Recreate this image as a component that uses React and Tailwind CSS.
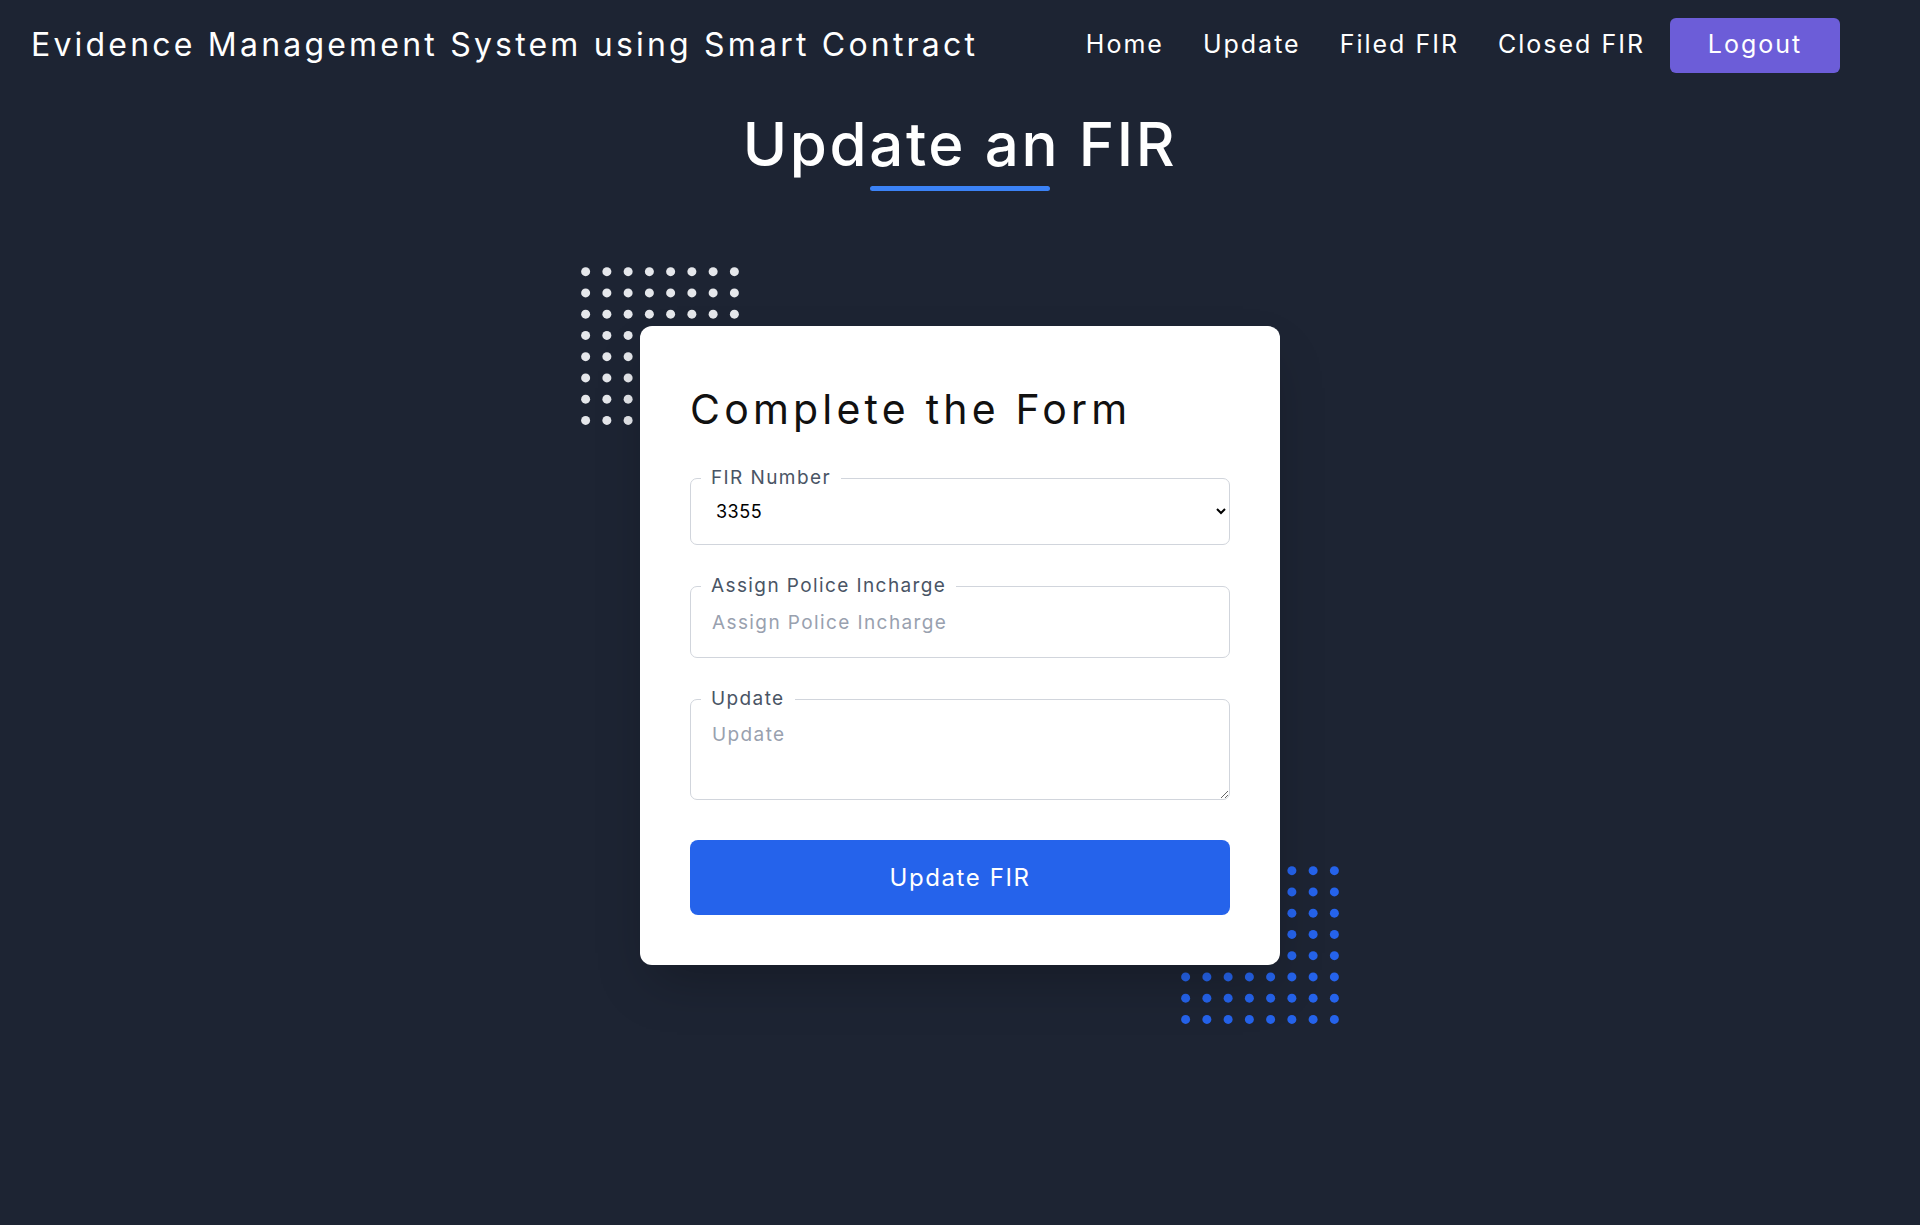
import React from "react";

function Dots({ color }) {
  const circles = [];
  for (let r = 0; r < 8; r++) {
    for (let c = 0; c < 8; c++) {
      circles.push(
        <circle key={r * 8 + c} cx={10.625 + c * 21.25} cy={10.625 + r * 21.25} r="4.5" fill={color} />
      );
    }
  }
  return (
    <svg width="170" height="170" viewBox="0 0 170 170">
      {circles}
    </svg>
  );
}

export default function App() {
  return (
    <div className="min-h-screen bg-[#1d2433] font-[family-name:Inter,sans-serif] text-white">
      <nav className="h-[90px] flex items-center justify-between pl-[31px] pr-[80px]">
        <div className="text-[32px] tracking-[3.2px] font-normal">
          Evidence Management System using Smart Contract
        </div>
        <div className="flex items-center">
          <div className="flex items-center gap-[39px] text-[25px] tracking-[2px]">
            <a href="#">Home</a>
            <a href="#">Update</a>
            <a href="#">Filed FIR</a>
            <a href="#">Closed FIR</a>
          </div>
          <button className="ml-[25px] w-[170px] h-[55px] rounded-[6px] bg-[#6c5dd8] text-[25px] tracking-[2px] text-white">
            Logout
          </button>
        </div>
      </nav>

      <main className="flex flex-col items-center pb-10">
        <h1 className="mt-[18px] text-[60px] leading-[72px] font-medium tracking-[2.6px]">Update an FIR</h1>
        <div className="mt-[6px] w-[180px] h-[5px] rounded-full bg-[#3b82f6]" />

        <div className="relative mt-[135px]">
          <div className="absolute -left-[65px] -top-[65px]">
            <Dots color="#e5e7eb" />
          </div>
          <div className="absolute -right-[65px] -bottom-[65px]">
            <Dots color="#2563eb" />
          </div>

          <div className="relative z-10 w-[640px] bg-white rounded-[12px] shadow-2xl px-[50px] pt-[50px] pb-[50px] text-black">
            <h2 className="mt-[9px] text-[41px] leading-[48px] font-normal tracking-[4.2px] text-[#111]">
              Complete the Form
            </h2>

            <fieldset className="mt-[32px] border border-gray-300 rounded-[7px] p-0 pb-[13px] m-0">
              <legend className="ml-[10px] px-[10px] text-[19px] leading-[26px] text-gray-600 tracking-[1.4px]">
                FIR Number
              </legend>
              <select
                defaultValue="3355"
                className="block w-full h-[40px] pl-[21px] pr-[12px] text-[18px] text-black bg-transparent outline-none tracking-[0.5px]"
              >
                <option value="3355">3355</option>
              </select>
            </fieldset>

            <fieldset className="mt-[28px] border border-gray-300 rounded-[7px] p-0 pb-[12px] m-0">
              <legend className="ml-[10px] px-[10px] text-[19px] leading-[26px] text-gray-600 tracking-[1.4px]">
                Assign Police Incharge
              </legend>
              <input
                type="text"
                placeholder="Assign Police Incharge"
                className="block w-full h-[46px] pl-[21px] pr-[12px] text-[19px] bg-transparent outline-none placeholder:text-gray-400 tracking-[1.4px]"
              />
            </fieldset>

            <fieldset className="mt-[28px] border border-gray-300 rounded-[7px] p-0 m-0">
              <legend className="ml-[10px] px-[10px] text-[19px] leading-[26px] text-gray-600 tracking-[1.4px]">
                Update
              </legend>
              <textarea
                placeholder="Update"
                className="block w-full h-[87px] pl-[21px] pr-[12px] pt-[9px] text-[19px] leading-[27px] bg-transparent outline-none placeholder:text-gray-400 tracking-[1.4px] rounded-b-[7px]"
              />
            </fieldset>

            <button className="mt-[40px] w-full h-[75px] rounded-[8px] bg-[#2563eb] text-white text-[24px] tracking-[1.6px]">
              Update FIR
            </button>
          </div>
        </div>
      </main>
    </div>
  );
}
